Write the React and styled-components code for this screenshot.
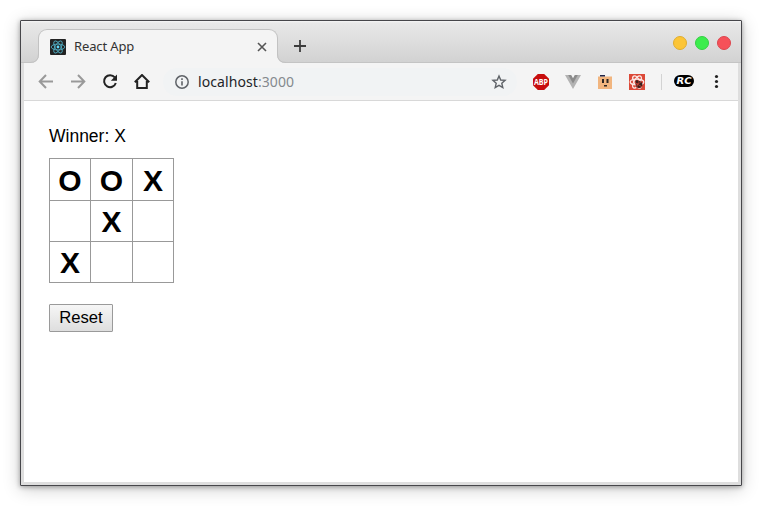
import React from "react";
import styled, { createGlobalStyle } from "styled-components";

const GlobalStyle = createGlobalStyle`
  * { box-sizing: border-box; }
  body { margin: 0; background: #fff; overflow: hidden; }
`;

const Desktop = styled.div`
  width: 762px;
  height: 506px;
  padding: 20px;
  background: #fff;
`;

const Window = styled.div`
  width: 722px;
  height: 466px;
  display: flex;
  flex-direction: column;
  background: #dedede;
  border: 1px solid #46464a;
  border-radius: 1px;
  box-shadow: 0 1px 5px rgba(0, 0, 0, 0.35), 0 3px 18px rgba(0, 0, 0, 0.2);
  font-family: "Noto Sans", sans-serif;
`;

const TitleBar = styled.header`
  height: 42px;
  flex: none;
  display: flex;
  align-items: flex-start;
  padding: 8px 10px 0 17px;
  background: linear-gradient(#f6f6f6 0, #e8e8e8 2px, #d2d2d2 41px, #c4c4c4 41px);
`;

const Tab = styled.div`
  position: relative;
  width: 240px;
  height: 34px;
  display: flex;
  align-items: center;
  padding: 0 10px 0 11px;
  background: #f4f4f4;
  border: 1px solid #c2c2c2;
  border-bottom: 0;
  border-radius: 9px 9px 0 0;
`;

const TabFoot = styled.svg`
  position: absolute;
  bottom: 0;
  width: 9px;
  height: 9px;
  ${(p) => (p.$right ? "right: -9px; transform: scaleX(-1);" : "left: -9px;")}
`;

const TabTitle = styled.span`
  flex: 1;
  margin-left: 8px;
  padding-bottom: 2px;
  font-size: 13px;
  line-height: 18px;
  letter-spacing: -0.12px;
  color: #333;
`;

const NewTab = styled.svg`
  width: 12px;
  height: 12px;
  margin: 11px 0 0 16px;
`;

const Controls = styled.div`
  display: flex;
  gap: 8px;
  margin: 7px 0 0 auto;
`;

const Control = styled.span`
  width: 14px;
  height: 14px;
  border-radius: 50%;
  background: ${(p) => p.$fill};
  border: 1px solid ${(p) => p.$edge};
`;

const Toolbar = styled.nav`
  height: 38px;
  flex: none;
  display: flex;
  align-items: center;
  margin: 0 3px;
  padding: 0 14px 0 14px;
  background: #f4f4f4;
  border-bottom: 1px solid #d8d8d8;
`;

const Nav = styled.div`
  display: flex;
  gap: 16px;
`;

const Icon = styled.svg`
  display: block;
  flex: none;
  width: ${(p) => p.$size || 16}px;
  height: ${(p) => p.$size || 16}px;
`;

const Address = styled.div`
  width: 354px;
  height: 28px;
  display: flex;
  align-items: center;
  margin-left: 13px;
  padding: 0 10px 0 11px;
  border-radius: 14px;
  background: #f1f3f4;
`;

const Url = styled.span`
  flex: 1;
  margin-left: 8px;
  font-size: 14px;
  line-height: 20px;
  letter-spacing: 0.08px;
  color: #222528;
`;

const Port = styled.span`
  color: #858a8e;
`;

const Extensions = styled.div`
  display: flex;
  align-items: center;
  gap: 16px;
  margin-left: 16px;
`;

const Divider = styled.span`
  width: 1px;
  height: 16px;
  margin-left: 16px;
  background: #d3d3d3;
`;

const Menu = styled(Icon)`
  margin-left: auto;
`;

const BadgeIcon = styled.svg`
  display: block;
  flex: none;
  width: 20px;
  height: 12px;
  margin: 0 0 2px 12px;
`;

const Page = styled.main`
  height: 381px;
  flex: none;
  margin: 0 3px;
  padding: 25px;
  background: #fff;
  color: #000;
  font-family: "Liberation Sans", Arial, sans-serif;
`;

const Status = styled.div`
  height: 32px;
  font-size: 17.5px;
  line-height: 21px;
`;

const Board = styled.div`
  display: grid;
  width: 125px;
  grid-template-columns: 41px 42px 41px;
  grid-template-rows: 42px 41px 41px;
  border-top: 1px solid #999;
  border-left: 1px solid #999;
`;

const Square = styled.div`
  border-right: 1px solid #999;
  border-bottom: 1px solid #999;
  font-size: 30px;
  font-weight: bold;
  line-height: ${(p) => (p.$tall ? 43 : 41)}px;
  text-align: center;
`;

const Reset = styled.button`
  display: block;
  width: 64px;
  height: 28px;
  margin-top: 21px;
  padding: 0;
  border: 1px solid #9a9a9a;
  border-radius: 1px;
  background: linear-gradient(#f6f6f6, #dedede);
  color: #000;
  font: 16.6667px/24px "Liberation Sans", Arial, sans-serif;
`;

const Orbits = ({ color, width }) => (
  <g fill="none" stroke={color} strokeWidth={width}>
    <ellipse cx="8" cy="8" rx="6.8" ry="2.9" />
    <ellipse cx="8" cy="8" rx="6.8" ry="2.9" transform="rotate(60 8 8)" />
    <ellipse cx="8" cy="8" rx="6.8" ry="2.9" transform="rotate(120 8 8)" />
  </g>
);

const Foot = ({ right }) => (
  <TabFoot $right={right} viewBox="0 0 9 9">
    <path d="M0 9Q9 9 9 0H10V9Z" fill="#f4f4f4" />
    <path d="M0 8.5Q8.5 8.5 8.5 0" fill="none" stroke="#c2c2c2" />
  </TabFoot>
);

const squares = ["O", "O", "X", "", "X", "", "X", "", ""];

export default function App() {
  return (
    <Desktop>
      <GlobalStyle />
      <Window>
        <TitleBar>
          <Tab>
            <Foot />
            <Icon viewBox="0 0 16 16">
              <rect width="16" height="16" rx="1" fill="#222" />
              <Orbits color="#53b9d1" width="0.8" />
              <circle cx="8" cy="8" r="1.4" fill="#61dafb" />
            </Icon>
            <TabTitle>React App</TabTitle>
            <Icon $size={10} viewBox="0 0 10 10">
              <path d="M1 1L9 9M9 1L1 9" stroke="#555" strokeWidth="1.6" />
            </Icon>
            <Foot right />
          </Tab>
          <NewTab viewBox="0 0 12 12">
            <path d="M6 0V12M0 6H12" stroke="#3c3c3c" strokeWidth="1.8" />
          </NewTab>
          <Controls>
            <Control $fill="#fcc537" $edge="#e0ad2e" />
            <Control $fill="#3bed4c" $edge="#35cf43" />
            <Control $fill="#f65159" $edge="#dc464e" />
          </Controls>
        </TitleBar>
        <Toolbar>
          <Nav>
            <Icon viewBox="0 0 16 16">
              <path d="M15 7.5H2M8 1L1.7 7.5L8 14" fill="none" stroke="#999" strokeWidth="2" />
            </Icon>
            <Icon viewBox="0 0 16 16">
              <path d="M1 7.5H14M8 1L14.3 7.5L8 14" fill="none" stroke="#999" strokeWidth="2" />
            </Icon>
            <Icon viewBox="0 0 16 16">
              <path d="M12.8 3.4A6 6 0 1 0 13.8 9" fill="none" stroke="#222" strokeWidth="2" />
              <path d="M15 0.5V6.7H8.8Z" fill="#222" />
            </Icon>
            <Icon viewBox="0 0 16 16">
              <path d="M0.8 8.2L8 1L15.2 8.2M3.2 7V14H12.8V7" fill="none" stroke="#222" strokeWidth="2" />
            </Icon>
          </Nav>
          <Address>
            <Icon viewBox="0 0 16 16">
              <circle cx="8" cy="8" r="6.2" fill="none" stroke="#5f6368" strokeWidth="1.5" />
              <path d="M8 7.2V11.5M8 4.3V6" stroke="#5f6368" strokeWidth="1.6" />
            </Icon>
            <Url>
              localhost<Port>:3000</Port>
            </Url>
            <Icon viewBox="0 0 16 16">
              <path d="M8 2L9.7 6L14.1 6.4L10.8 9.3L11.8 13.6L8 11.3L4.2 13.6L5.2 9.3L1.9 6.4L6.3 6Z" fill="none" stroke="#5f6368" strokeWidth="1.4" />
            </Icon>
          </Address>
          <Extensions>
            <Icon viewBox="0 0 16 16">
              <path d="M4.8 0H11.2L16 4.8V11.2L11.2 16H4.8L0 11.2V4.8Z" fill="#c70d0d" />
              <text x="8" y="11" textAnchor="middle" fill="#fff" fontFamily="Open Sans, sans-serif" fontWeight="700" fontSize="8.2" textLength="14" lengthAdjust="spacingAndGlyphs">ABP</text>
            </Icon>
            <Icon viewBox="0 0 16 16">
              <path d="M0 1H4L8 8L12 1H16L8 15Z" fill="#b3b3b3" />
              <path d="M3.2 1H6.2L8 4.2L9.8 1H12.8L8 9.4Z" fill="#8b8b8b" />
            </Icon>
            <Icon viewBox="0 0 16 16">
              <path d="M1 2.5H15V15H1Z" fill="#f1b57f" />
              <path d="M3 1H8V2.5H3Z" fill="#202548" />
              <path d="M5 5H7V9H5ZM9.5 5H11.5V9H9.5ZM7 11H10V12.5H7Z" fill="#2b2522" />
            </Icon>
            <Icon viewBox="0 0 16 16">
              <rect width="16" height="16" fill="#dc4938" />
              <Orbits color="#fbe9e6" width="1.2" />
              <ellipse cx="10" cy="10.4" rx="3.4" ry="3.5" fill="#3d201d" />
              <path d="M5.8 8.5L14 13.5M6 12L13 7.3M7.5 14L10 6" stroke="#dc4938" strokeWidth="0.7" />
              <circle cx="8" cy="7.6" r="1.5" fill="#3d201d" />
            </Icon>
          </Extensions>
          <Divider />
          <BadgeIcon viewBox="0 0 20 12">
            <rect width="20" height="12" rx="6" fill="#000" />
            <text x="10" y="9" textAnchor="middle" fill="#fff" fontFamily="DejaVu Sans, sans-serif" fontStyle="italic" fontWeight="700" fontSize="9" textLength="15" lengthAdjust="spacingAndGlyphs">RC</text>
          </BadgeIcon>
          <Menu viewBox="0 0 16 16">
            <circle cx="8.5" cy="2.5" r="1.6" fill="#222" />
            <circle cx="8.5" cy="7.5" r="1.6" fill="#222" />
            <circle cx="8.5" cy="12.5" r="1.6" fill="#222" />
          </Menu>
        </Toolbar>
        <Page>
          <Status>Winner: X</Status>
          <Board>
            {squares.map((value, index) => (
              <Square key={index} $tall={index < 3}>{value}</Square>
            ))}
          </Board>
          <Reset>Reset</Reset>
        </Page>
      </Window>
    </Desktop>
  );
}
